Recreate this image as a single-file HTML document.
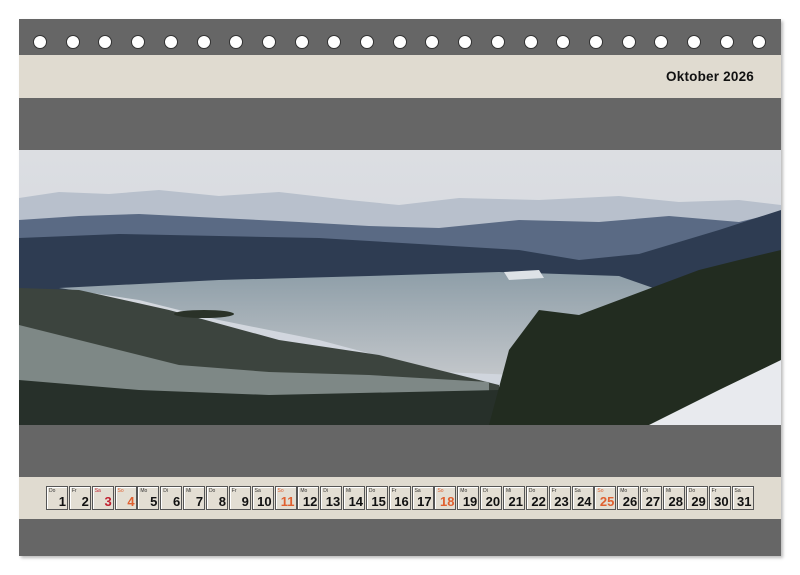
<!DOCTYPE html>
<html><head><meta charset="utf-8"><style>
body{margin:0;width:800px;height:575px;background:#fff;position:relative;overflow:hidden;font-family:"Liberation Sans",Arial,sans-serif}
.f{position:absolute;left:19px;top:19px;width:762px;height:537px;background:#666;box-shadow:2px 2px 3px #bbb}
.b{position:absolute;left:19px;width:762px;background:#e0dbd0}
.h{position:absolute;top:35px;width:12px;height:12px;border-radius:50%;background:#fff;border:1.5px solid #333}
.c{position:absolute;top:486px;width:20px;height:22px;border:1px solid #555;background:#e3ded3;box-shadow:inset 1px 1px 0 #fff}
.c i{position:absolute;left:2px;top:1px;font-style:normal;font-size:5px;color:#333}
.c b{position:absolute;right:1px;bottom:0px;font-size:13px;font-weight:900;color:#111}
.s b,.s i{color:#e06030}.r b,.r i{color:#c02030}
</style></head><body>
<div class="f"></div>
<div class="b" style="top:55px;height:43px"></div>
<div style="position:absolute;right:46px;top:69px;font-weight:900;font-size:13.5px;color:#111;letter-spacing:0.2px">Oktober 2026</div>
<div class="b" style="top:477px;height:42px"></div>
<svg style="position:absolute;left:19px;top:150px" width="762" height="275" viewBox="0 0 762 275">
<defs><linearGradient id="sk" x1="0" y1="0" x2="0" y2="1"><stop offset="0" stop-color="#dcdee2"/><stop offset="1" stop-color="#cdd3dc"/></linearGradient>
<linearGradient id="lk" x1="0" y1="0" x2="0" y2="1"><stop offset="0" stop-color="#8e9ea8"/><stop offset="1" stop-color="#c2c6ca"/></linearGradient></defs>
<rect width="762" height="275" fill="url(#sk)"/>
<path d="M0 48 L40 42 L90 44 L140 40 L200 46 L260 42 L330 50 L380 55 L440 48 L520 50 L600 46 L660 52 L720 50 L762 55 L762 120 L0 120Z" fill="#b8c0cc"/>
<path d="M0 70 L60 66 L120 64 L200 68 L280 72 L350 76 L420 78 L500 70 L580 72 L650 66 L720 72 L762 62 L762 140 L0 140Z" fill="#5a6a84"/>
<path d="M0 88 L100 84 L200 86 L300 88 L400 94 L500 100 L560 110 L620 104 L700 80 L762 60 L762 140 L0 140Z" fill="#2e3c52"/>
<path d="M40 138 L200 130 L350 126 L480 122 L600 126 L640 140 L620 165 L560 200 L500 225 L420 222 L300 190 L200 170 L120 150Z" fill="url(#lk)"/>
<path d="M0 138 L60 140 L150 160 L260 190 L360 205 L440 225 L480 235 L480 275 L0 275Z" fill="#3c443e"/>
<path d="M0 175 L80 195 L160 215 L250 222 L350 225 L470 232 L470 260 L0 255Z" fill="#7e8886"/>
<path d="M0 230 L120 240 L250 245 L480 240 L480 275 L0 275Z" fill="#27302a"/>
<path d="M470 275 L490 200 L520 160 L560 165 L600 150 L640 135 L680 120 L720 110 L762 100 L762 275Z" fill="#222c20"/>
<path d="M630 275 L700 240 L762 210 L762 275Z" fill="#e8eaee"/>
<ellipse cx="185" cy="164" rx="30" ry="4" fill="#2a3228"/>
<path d="M485 122 L520 120 L525 128 L490 130Z" fill="#dde2e6"/>
</svg>
<div id="h"></div><div id="c"></div>
<script>
var h='';for(var i=0;i<23;i++){h+='<div class="h" style="left:'+(33+i*32.7)+'px"></div>';}
var d=['Do','Fr','Sa','So','Mo','Di','Mi'],c='';
for(var k=1;k<=31;k++){var w=d[(k-1)%7];var cl=k==3?'r':(w=='So'?'s':'');
c+='<div class="c '+cl+'" style="left:'+(46+(k-1)*22.85)+'px"><i>'+w+'</i><b>'+k+'</b></div>';}
document.getElementById('h').innerHTML=h;document.getElementById('c').innerHTML=c;
</script>
</body></html>
